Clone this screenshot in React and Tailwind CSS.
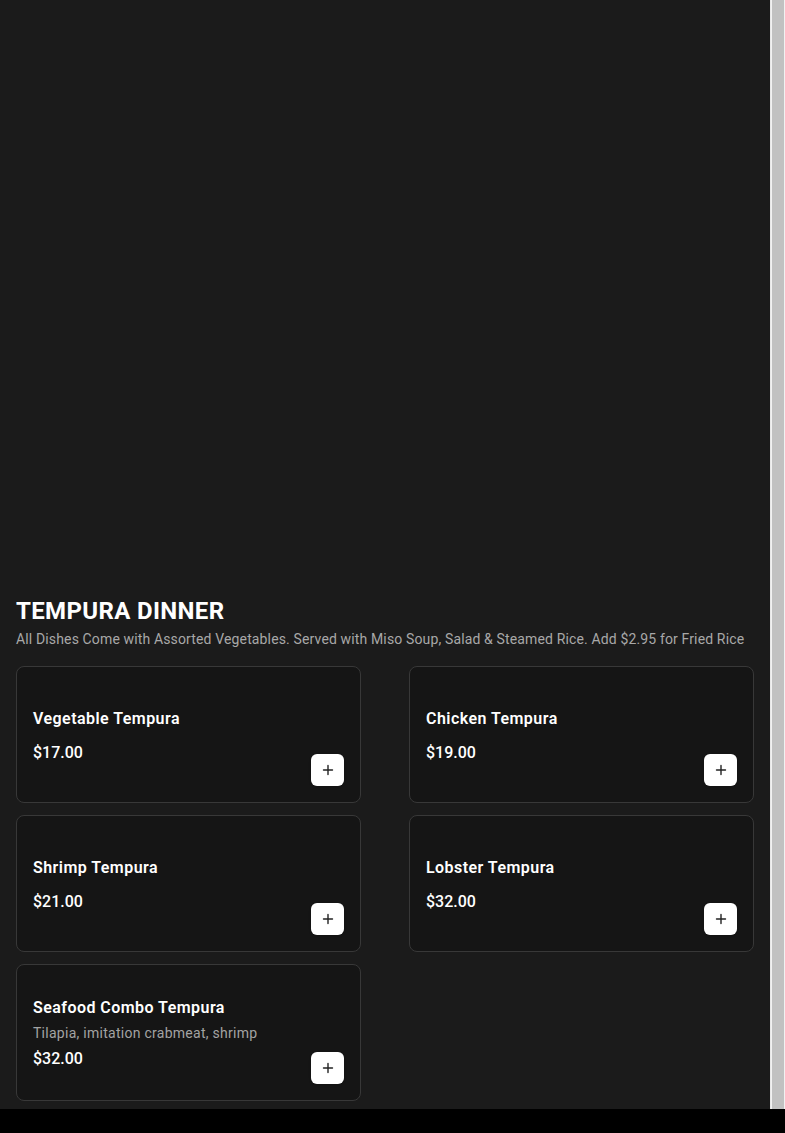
const ITEMS = [
  { name: "Vegetable Tempura", price: "$17.00" },
  { name: "Chicken Tempura", price: "$19.00" },
  { name: "Shrimp Tempura", price: "$21.00" },
  { name: "Lobster Tempura", price: "$32.00" },
  { name: "Seafood Combo Tempura", desc: "Tilapia, imitation crabmeat, shrimp", price: "$32.00" },
];

function PlusIcon() {
  return (
    <svg width="12" height="12" viewBox="0 0 12 12" fill="none">
      <path d="M6 1.5v9M1.5 6h9" stroke="#222" strokeWidth="1.4" strokeLinecap="round" />
    </svg>
  );
}

function ItemCard({ item }) {
  return (
    <div className="flex h-[137px] items-center justify-between rounded-lg border border-[#383838] bg-[#151515] px-4">
      <div className="flex flex-col pt-0.5">
        <h3 className="text-[16px] font-semibold leading-6 tracking-[0.45px] text-white">{item.name}</h3>
        {item.desc && (
          <p className="mt-[3px] text-[14px] leading-5 tracking-[0.27px] text-[#a3a3a3]">{item.desc}</p>
        )}
        <p className={`${item.desc ? "mt-1" : "mt-2.5"} text-[16px] font-medium leading-6 text-white`}>
          {item.price}
        </p>
      </div>
      <button className="mb-4 flex h-8 w-[33px] items-center justify-center self-end rounded-md bg-white shadow">
        <PlusIcon />
      </button>
    </div>
  );
}

export default function App() {
  return (
    <div className="min-h-screen bg-black" style={{ fontFamily: "Roboto, 'Noto Sans', sans-serif" }}>
      <div className="flex h-[1109px]">
        {/* MAIN COLUMN */}
        <main className="flex w-[770px] flex-col bg-[#1b1b1b] px-4">
          <div className="h-[595px]" />
          <h2 className="text-[24px] font-bold leading-8 tracking-[0.35px] text-white">TEMPURA DINNER</h2>
          <p className="mt-0.5 text-[14px] leading-5 tracking-[0.14px] text-[#a8a8a8]">
            All Dishes Come with Assorted Vegetables. Served with Miso Soup, Salad &amp; Steamed Rice. Add $2.95 for Fried Rice
          </p>
          <div className="mt-[17px] grid grid-cols-2 gap-x-12 gap-y-3">
            {ITEMS.map((item) => (
              <ItemCard key={item.name} item={item} />
            ))}
          </div>
        </main>
        {/* SCROLLBAR */}
        <div className="flex w-[15px] border-l border-[#e8e8e8] bg-[#f1f1f1] px-[1px]">
          <div className="flex-1 bg-[#c1c1c1]" />
        </div>
      </div>
    </div>
  );
}
